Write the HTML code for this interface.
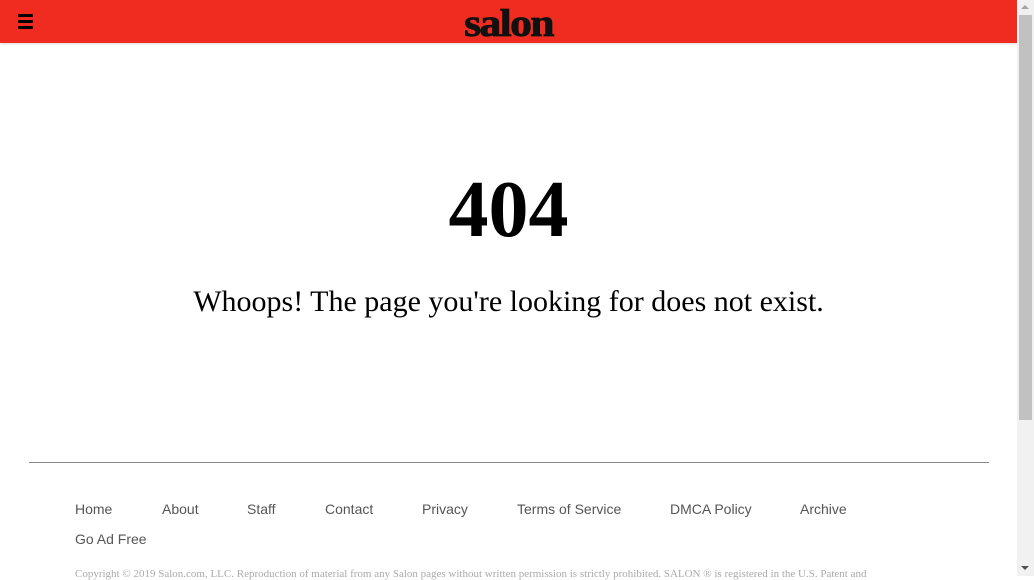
<!DOCTYPE html>
<html><head><meta charset="utf-8"><style>
*{margin:0;padding:0;box-sizing:border-box}
html,body{width:1034px;height:576px;overflow:hidden;background:#fff}
.hdr{position:absolute;left:0;top:0;width:1017px;height:43px;background:#ef2c1f;box-shadow:0 1px 2px rgba(0,0,0,.15)}
.burger{position:absolute;left:18px;top:14px;width:15px}
.burger i{display:block;height:3px;background:#000;margin-bottom:3px;border-radius:1px}
.logo{position:absolute;left:0;width:1017px;top:4px;text-align:center;font:900 39px/40px "Liberation Serif",serif;letter-spacing:-1.5px;color:#111;transform:scaleX(1.12);-webkit-text-stroke:0.8px #111}
.big{position:absolute;left:0;width:1017px;top:165px;text-align:center;font:bold 80px/90px "Liberation Serif",serif;color:#000}
.msg{position:absolute;left:0;width:1017px;top:284px;text-align:center;font:30px/36px "Liberation Serif",serif;color:#000}
.hr{position:absolute;left:29px;width:960px;top:462px;border-top:1px solid #888}
.nav{position:absolute;top:501px;font:14px/16px "Liberation Sans",sans-serif;color:#555}
.copy{position:absolute;left:75px;top:568px;font:11px "Liberation Serif",serif;color:#aaa;white-space:nowrap}
.sb{position:absolute;left:1017px;top:0;width:17px;height:576px;background:#f1f1f1}
.th{position:absolute;left:1019px;top:15px;width:13px;height:405px;background:#c1c1c1}
</style></head><body>
<div class="hdr"><div class="burger"><i></i><i></i><i></i></div><div class="logo">salon</div></div>
<div class="big">404</div>
<div class="msg">Whoops! The page you're looking for does not exist.</div>
<div class="hr"></div>
<div class="nav" style="left:75px">Home</div>
<div class="nav" style="left:162px">About</div>
<div class="nav" style="left:247px">Staff</div>
<div class="nav" style="left:325px">Contact</div>
<div class="nav" style="left:422px">Privacy</div>
<div class="nav" style="left:517px">Terms of Service</div>
<div class="nav" style="left:670px">DMCA Policy</div>
<div class="nav" style="left:800px">Archive</div>
<div class="nav" style="left:75px;top:531px">Go Ad Free</div>
<div class="copy">Copyright © 2019 Salon.com, LLC. Reproduction of material from any Salon pages without written permission is strictly prohibited. SALON ® is registered in the U.S. Patent and</div>
<div class="sb"></div><div class="th"></div>
<div style="position:absolute;left:1021px;top:5px;width:0;height:0;border-left:4px solid transparent;border-right:4px solid transparent;border-bottom:4px solid #a3a3a3"></div>
<div style="position:absolute;left:1021px;top:566px;width:0;height:0;border-left:4px solid transparent;border-right:4px solid transparent;border-top:4px solid #505050"></div>
</body></html>
